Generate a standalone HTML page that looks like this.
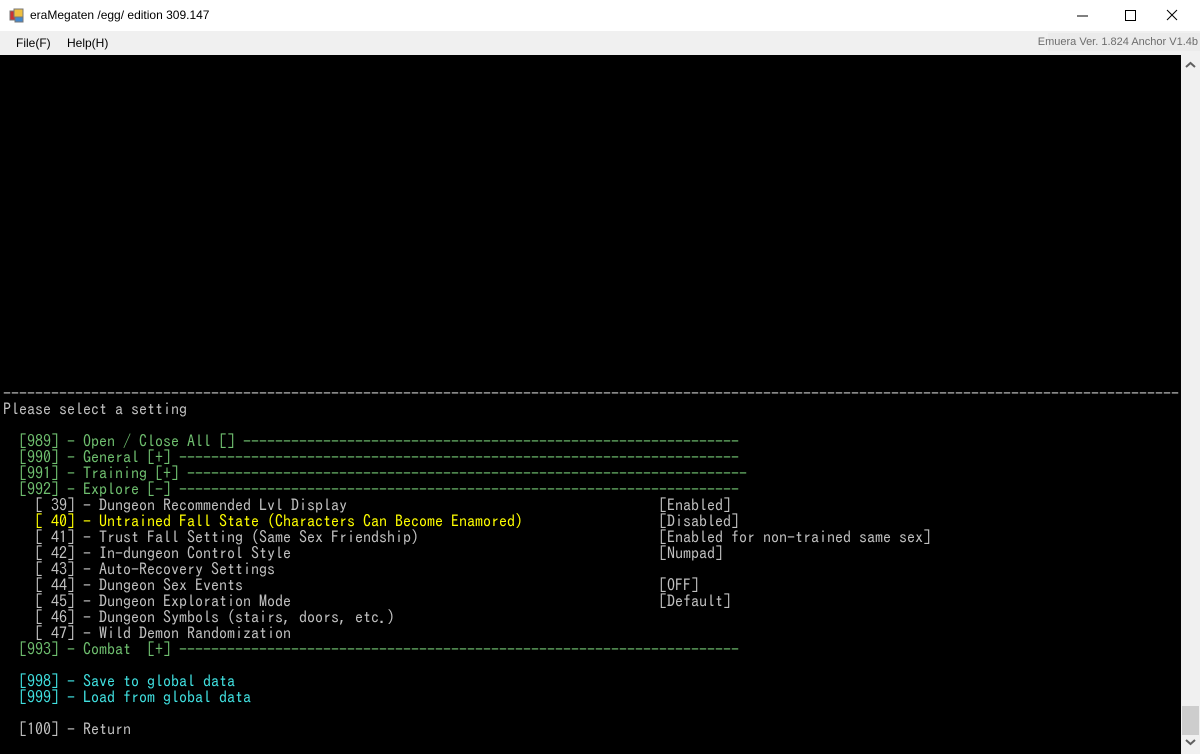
<!DOCTYPE html>
<html><head><meta charset="utf-8"><style>
body{margin:0;width:1200px;height:754px;overflow:hidden;background:#fff;font-family:"Segoe UI","Liberation Sans",sans-serif;position:relative}
.title{position:absolute;top:0;left:0;width:1200px;height:31px;background:#fff}
.title .t{position:absolute;left:30px;top:8px;font-size:12px;color:#000}
.menu{position:absolute;top:31px;left:0;width:1200px;height:24px;background:#f0f0f0;font-size:12px}
.menu span{position:absolute;top:5px}
.ver{position:absolute;right:0;top:2px;width:152px;height:18px;background:#ebebeb;color:#6d6d6d;font-size:11px;text-align:right;padding-top:3px;box-sizing:border-box;white-space:nowrap;overflow:visible}
.ver span{position:absolute;right:2px;top:3px}
.con{position:absolute;top:55px;left:0;width:1181px;height:699px;background:#000}
.sb{position:absolute;top:55px;left:1181px;width:19px;height:699px;background:#f0f0f0}
.thumb{position:absolute;left:1182px;top:706px;width:17px;height:29px;background:#cdcdcd}
pre{margin:0;position:absolute;left:3px;top:385px;font-family:"IPAGothic","Liberation Mono",monospace;font-size:16px;line-height:16px;color:#c0c0c0;white-space:pre}
.g{color:#6fbf6f}.y{color:#ffff00}.c{color:#40e0e0}
.r{position:absolute;left:659px;font-family:"IPAGothic","Liberation Mono",monospace;font-size:16px;line-height:16px;color:#c0c0c0;white-space:pre}
</style></head><body>
<div class="title">
<svg style="position:absolute;left:9px;top:8px" width="16" height="16"><rect x="1" y="3" width="5" height="9" fill="#c33" stroke="#777"/><rect x="5" y="1" width="9" height="8" fill="#f0c040" stroke="#777"/><rect x="6" y="9" width="8" height="5" fill="#48c" stroke="#777"/></svg>
<span class="t">eraMegaten /egg/ edition 309.147</span>
<svg style="position:absolute;left:1074px;top:8px" width="16" height="16"><line x1="3" y1="8" x2="14" y2="8" stroke="#000"/></svg>
<svg style="position:absolute;left:1122px;top:7px" width="16" height="16"><rect x="3.5" y="3.5" width="10" height="10" fill="none" stroke="#000"/></svg>
<svg style="position:absolute;left:1164px;top:7px" width="16" height="16"><path d="M3 3L13 13M13 3L3 13" stroke="#000"/></svg>
</div>
<div class="menu"><span style="left:16px">File(F)</span><span style="left:67px">Help(H)</span><div class="ver"><span>Emuera Ver. 1.824 Anchor V1.4b</span></div></div>
<div class="con"></div>
<div class="sb"><svg style="position:absolute;left:4px;top:6px" width="11" height="8"><path d="M1 6L5.5 2L10 6" stroke="#606060" stroke-width="2" fill="none"/></svg>
<svg style="position:absolute;left:4px;top:683px" width="11" height="8"><path d="M1 2L5.5 6L10 2" stroke="#606060" stroke-width="2" fill="none"/></svg></div>
<div class="thumb"></div>
<pre>---------------------------------------------------------------------------------------------------------------------------------------------------
Please select a setting

<span class="g">  [989] - Open / Close All [] --------------------------------------------------------------</span>
<span class="g">  [990] - General [+] ----------------------------------------------------------------------</span>
<span class="g">  [991] - Training [+] ----------------------------------------------------------------------</span>
<span class="g">  [992] - Explore [-] ----------------------------------------------------------------------</span>
    [ 39] - Dungeon Recommended Lvl Display
<span class="y">    [ 40] - Untrained Fall State (Characters Can Become Enamored)</span>
    [ 41] - Trust Fall Setting (Same Sex Friendship)
    [ 42] - In-dungeon Control Style
    [ 43] - Auto-Recovery Settings
    [ 44] - Dungeon Sex Events
    [ 45] - Dungeon Exploration Mode
    [ 46] - Dungeon Symbols (stairs, doors, etc.)
    [ 47] - Wild Demon Randomization
<span class="g">  [993] - Combat  [+] ----------------------------------------------------------------------</span>

<span class="c">  [998] - Save to global data</span>
<span class="c">  [999] - Load from global data</span>

  [100] - Return</pre>
<div class="r" style="top:497px">[Enabled]</div>
<div class="r y" style="top:513px">[Disabled]</div>
<div class="r" style="top:529px">[Enabled for non-trained same sex]</div>
<div class="r" style="top:545px">[Numpad]</div>
<div class="r" style="top:577px">[OFF]</div>
<div class="r" style="top:593px">[Default]</div>
</body></html>
